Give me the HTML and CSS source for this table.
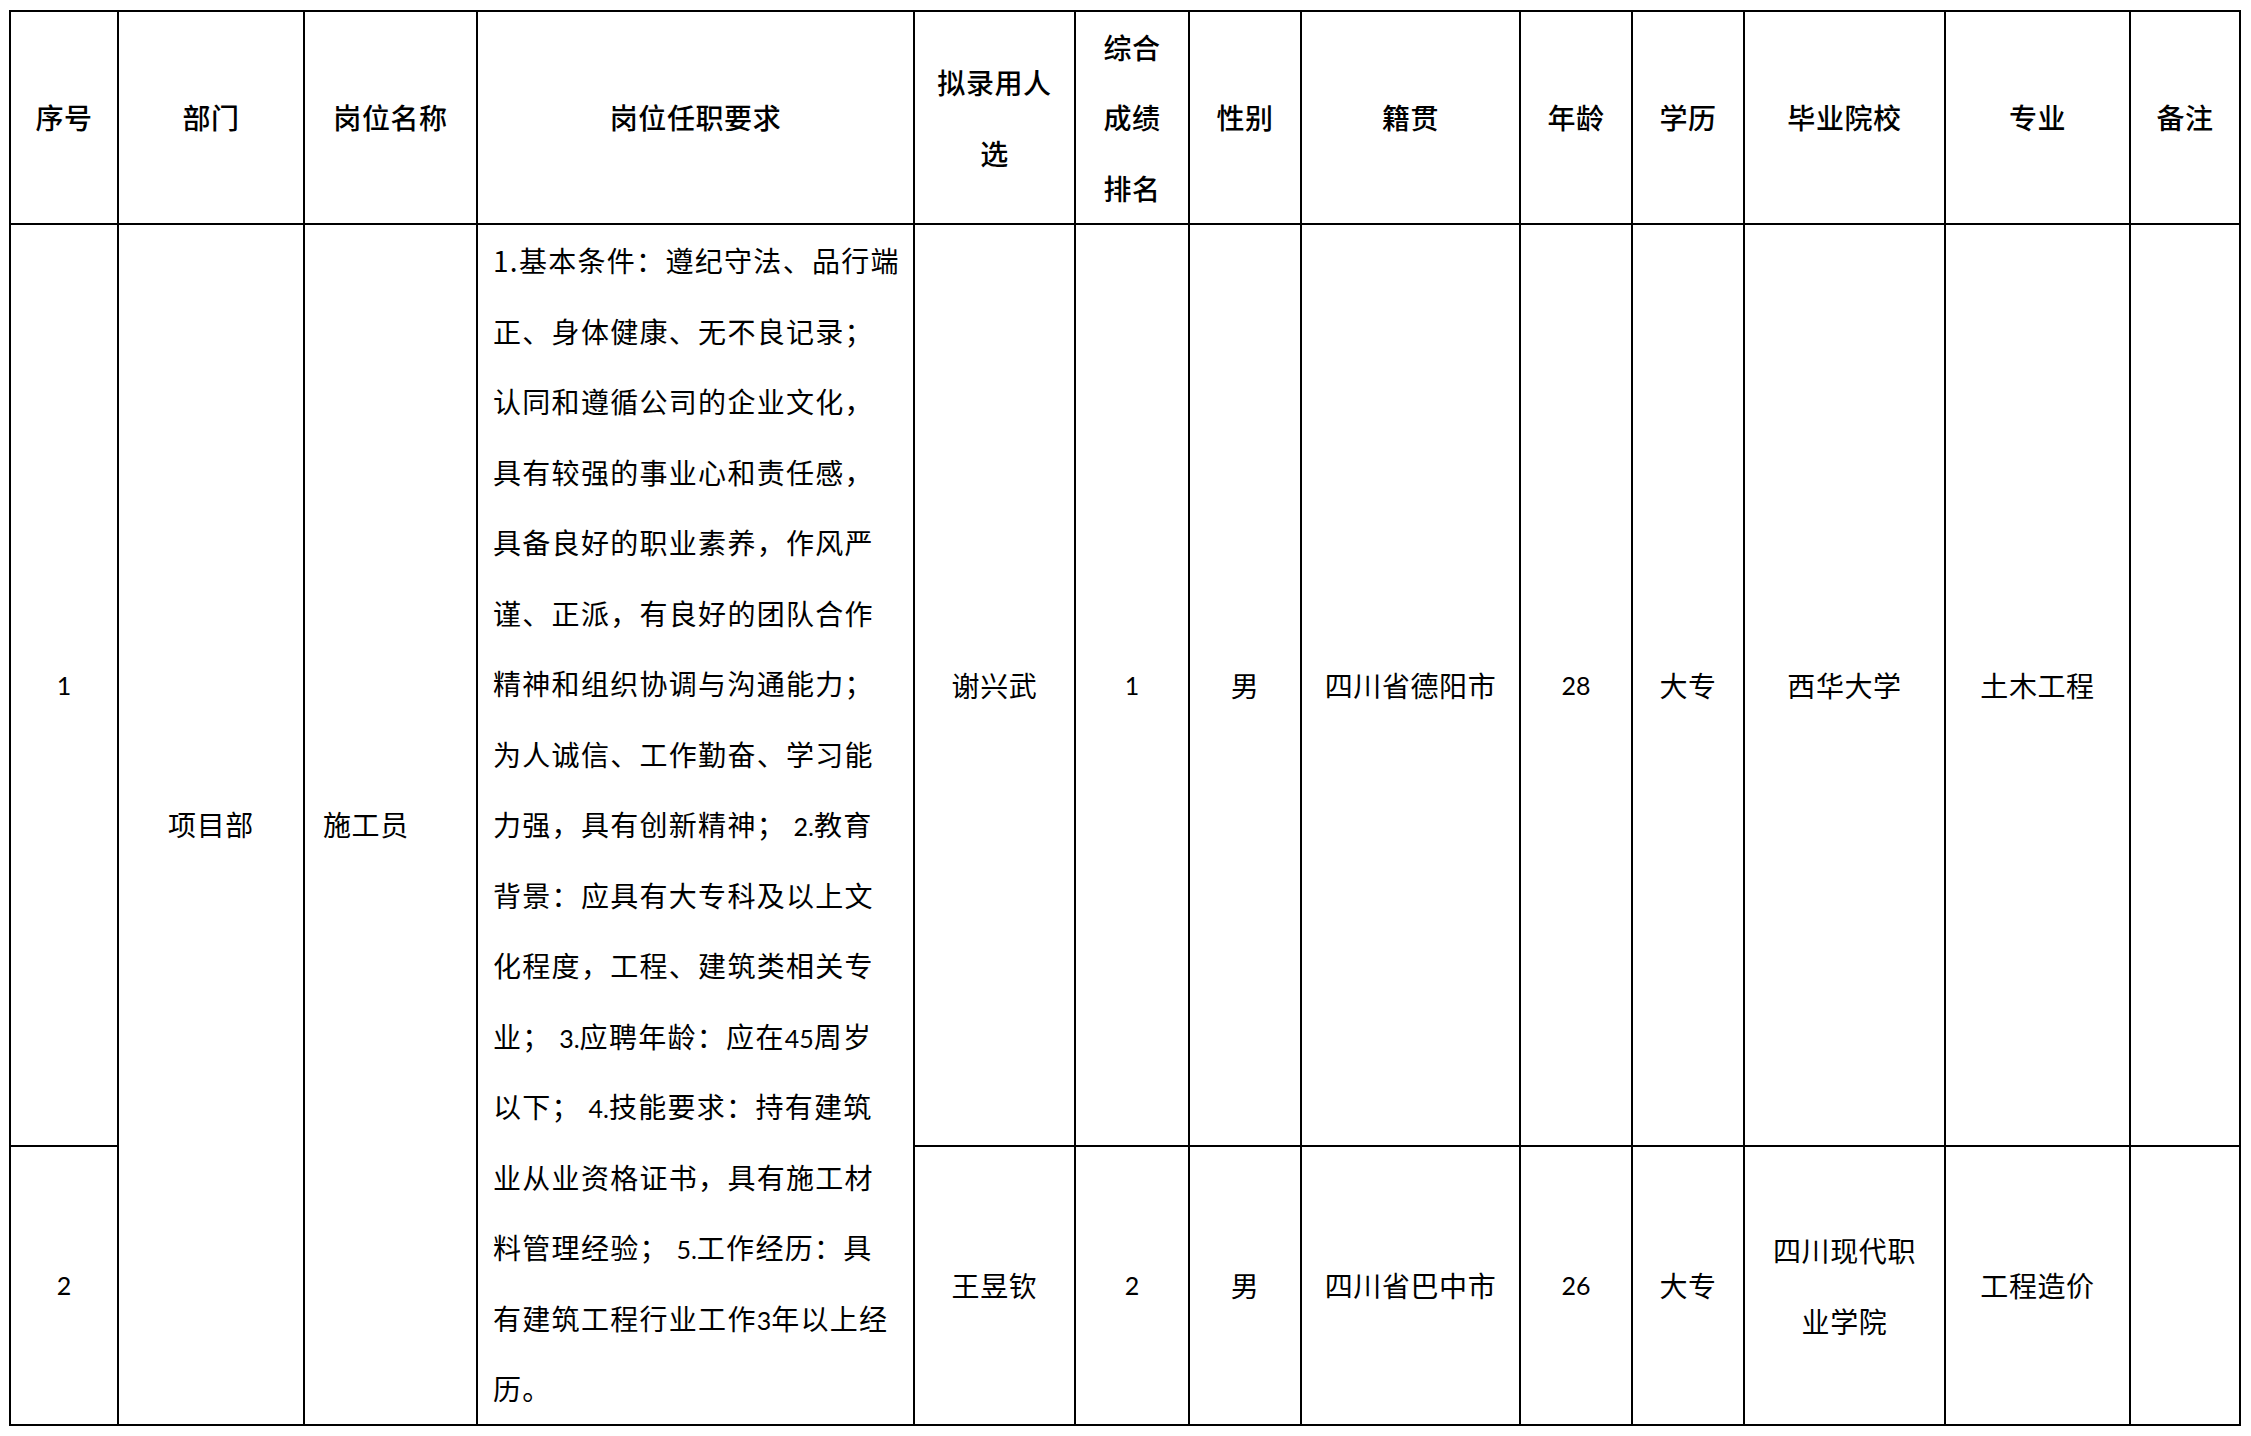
FILE: index.html
```html
<!DOCTYPE html>
<html lang="zh-CN">
<head>
<meta charset="utf-8">
<title>拟录用人员公示表</title>
<link rel="stylesheet" href="styles.css">
</head>
<body>
<div class="sheet">
  <div class="cell head"><span>序号</span></div>
  <div class="cell head"><span>部门</span></div>
  <div class="cell head"><span>岗位名称</span></div>
  <div class="cell head"><span>岗位任职要求</span></div>
  <div class="cell head"><span>拟录用人<br>选</span></div>
  <div class="cell head"><span>综合<br>成绩<br>排名</span></div>
  <div class="cell head"><span>性别</span></div>
  <div class="cell head"><span>籍贯</span></div>
  <div class="cell head"><span>年龄</span></div>
  <div class="cell head"><span>学历</span></div>
  <div class="cell head"><span>毕业院校</span></div>
  <div class="cell head"><span>专业</span></div>
  <div class="cell head"><span>备注</span></div>

  <div class="cell"><span class="num">1</span></div>
  <div class="cell span2"><span>项目部</span></div>
  <div class="cell span2 left"><span>施工员</span></div>
  <div class="cell span2 req"><p class="req-text">1.基本条件：遵纪守法、品行端<br>正、身体健康、无不良记录；<br>认同和遵循公司的企业文化，<br>具有较强的事业心和责任感，<br>具备良好的职业素养，作风严<br>谨、正派，有良好的团队合作<br>精神和组织协调与沟通能力；<br>为人诚信、工作勤奋、学习能<br>力强，具有创新精神； <span class="num">2.</span>教育<br>背景：应具有大专科及以上文<br>化程度，工程、建筑类相关专<br>业； <span class="num">3.</span>应聘年龄：应在<span class="num">45</span>周岁<br>以下； <span class="num">4.</span>技能要求：持有建筑<br>业从业资格证书，具有施工材<br>料管理经验； <span class="num">5.</span>工作经历：具<br>有建筑工程行业工作<span class="num">3</span>年以上经<br>历。</p></div>
  <div class="cell"><span>谢兴武</span></div>
  <div class="cell"><span class="num">1</span></div>
  <div class="cell"><span>男</span></div>
  <div class="cell"><span>四川省德阳市</span></div>
  <div class="cell"><span class="num">28</span></div>
  <div class="cell"><span>大专</span></div>
  <div class="cell"><span>西华大学</span></div>
  <div class="cell"><span>土木工程</span></div>
  <div class="cell"></div>

  <div class="cell"><span class="num">2</span></div>
  <div class="cell"><span>王昱钦</span></div>
  <div class="cell"><span class="num">2</span></div>
  <div class="cell"><span>男</span></div>
  <div class="cell"><span>四川省巴中市</span></div>
  <div class="cell"><span class="num">26</span></div>
  <div class="cell"><span>大专</span></div>
  <div class="cell"><span>四川现代职<br>业学院</span></div>
  <div class="cell"><span>工程造价</span></div>
  <div class="cell"></div>
</div>
</body>
</html>
```

FILE: styles.css
```css
html, body {
  margin: 0;
  padding: 0;
  background: #ffffff;
}

body {
  font-family: "Noto Sans CJK SC", "Noto Sans", sans-serif;
  font-size: 28px;
  color: #000000;
}

.sheet {
  margin: 10px 0 0 9px;
  width: 2232px;
  box-sizing: border-box;
  display: grid;
  grid-template-columns: 106px 184px 171px 435px 159px 112px 110px 217px 110px 110px 199px 183px 108px;
  grid-template-rows: 211px 920px 277px;
  gap: 2px;
  padding: 2px;
  background: #000000;
}

.cell {
  background: #ffffff;
  display: flex;
  align-items: center;
  justify-content: center;
  text-align: center;
  line-height: 70.5px;
  letter-spacing: 0.6px;
  white-space: nowrap;
  font-weight: 400;
  overflow: hidden;
}

.head {
  font-weight: 500;
}

.span2 {
  grid-row: span 2;
}

.left {
  justify-content: flex-start;
  text-align: left;
  padding-left: 18px;
}

.req {
  display: block;
  text-align: left;
  padding-left: 15px;
  letter-spacing: 1.3px;
}

.req-text {
  margin: 0;
}

.num {
  font-family: "Lato", "Open Sans", sans-serif;
  font-size: 25px;
  letter-spacing: 0;
  line-height: 1;
}
```
